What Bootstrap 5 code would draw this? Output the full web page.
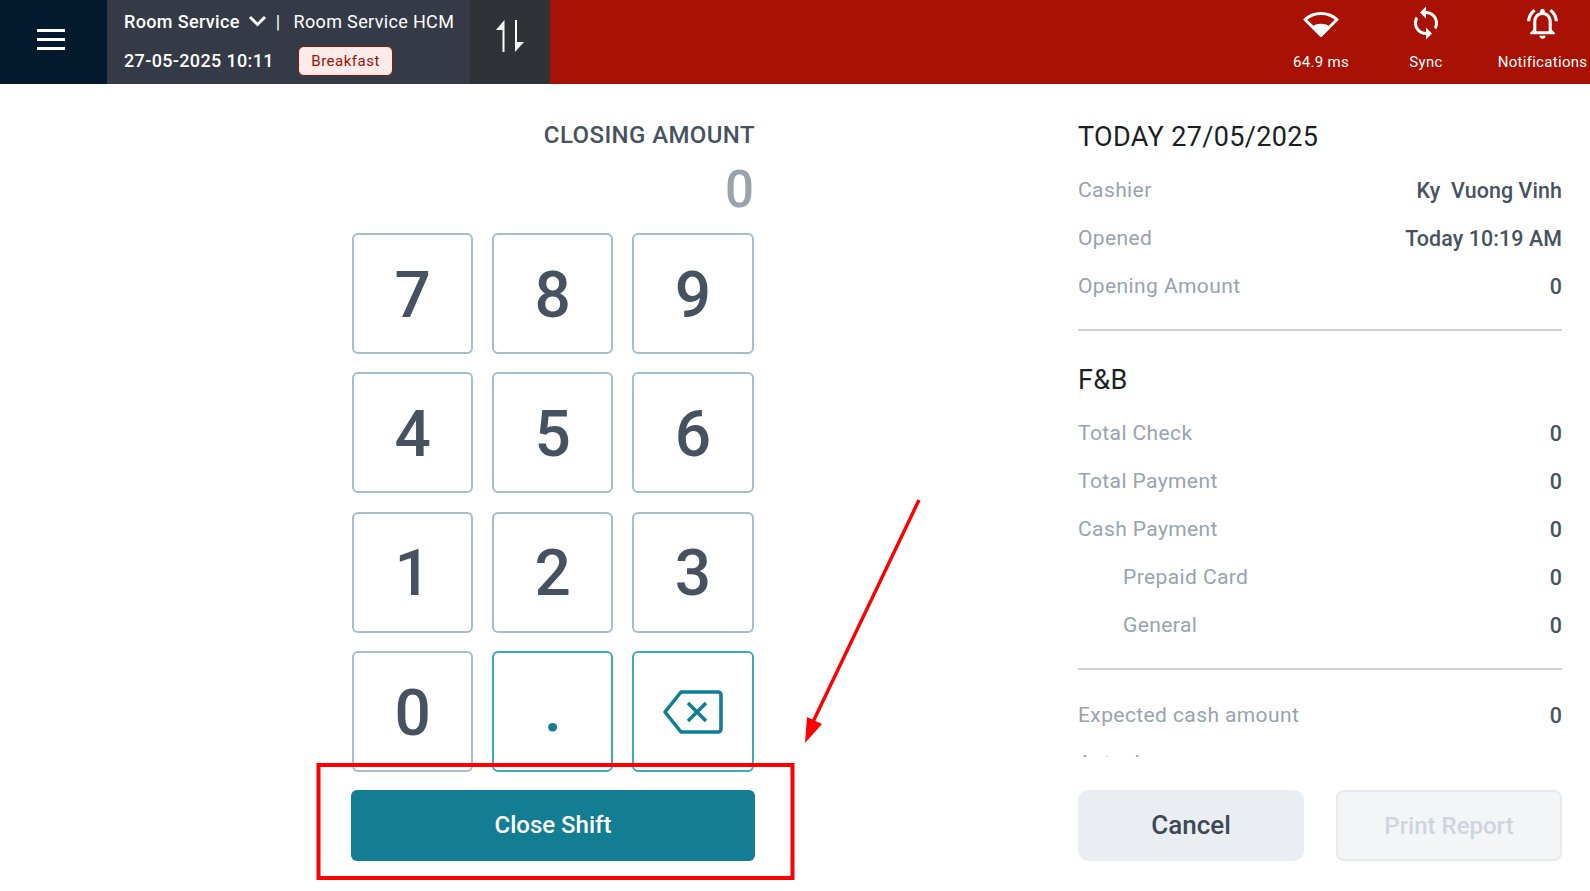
<!DOCTYPE html>
<html lang="en">
<head>
  <meta charset="UTF-8" />
  <meta name="viewport" content="width=device-width, initial-scale=1.0"/>
  <title>Close Shift</title>
  <link href="https://cdn.jsdelivr.net/npm/bootstrap@5.3.6/dist/css/bootstrap.min.css" rel="stylesheet"/>

  <style>
    html, body {
      height: 100%;
      overflow: hidden;
    }
    body {
      font-family: Roboto, "Liberation Sans", sans-serif;
      background-color: #fff;
      position: relative;
    }
    .top-bar {
      height: 84px;
      background-color: #a81103;
      color: #fff;
    }
    .menu-cell {
      width: 107px;
      background-color: #031a2e;
      padding-left: 37px;
      padding-top: 27px;
    }
    .info-cell {
      width: 363px;
      background-color: #343a46;
      padding: 9px 0 0 17px;
    }
    .info-line {
      height: 24px;
      font-size: 18px;
      letter-spacing: .35px;
    }
    .info-line + .info-line {
      margin-top: 15px;
    }
    .info-sep {
      margin: 0 13px 0 9px;
    }
    .meal-tag {
      margin: 1px 0 0 24px;
      padding: 0 12.5px;
      height: 30px;
      line-height: 28px;
      font-size: 15px;
      letter-spacing: .5px;
      color: #9b1208;
      background-color: #ffecea;
      border: 1px solid #9b1208;
      border-radius: 6px;
    }
    .swap-cell {
      width: 80px;
      background-color: #2f3237;
      padding: 19px 0 0 24px;
    }
    .stat-item {
      font-size: 15px;
      letter-spacing: .3px;
      text-align: center;
    }
    .stat-item svg {
      display: block;
      margin: 0 auto;
    }
    .stat-label {
      line-height: 18px;
      white-space: nowrap;
    }
    .stat-wifi {
      width: 60px;
      margin-right: 45px;
      padding-top: 10px;
    }
    .stat-wifi .stat-label {
      margin-top: 15px;
    }
    .stat-sync {
      width: 60px;
      margin-right: 40px;
      padding-top: 5px;
    }
    .stat-sync .stat-label {
      margin-top: 12px;
    }
    .stat-bell {
      width: 93px;
      margin-right: 1px;
      padding-top: 5px;
    }
    .stat-bell .stat-label {
      margin-top: 11px;
    }
    .main-area {
      height: 807px;
      padding-left: 351px;
    }
    .pad-side {
      width: 404px;
      padding-top: 36px;
    }
    .pad-title {
      font-size: 24px;
      line-height: 30px;
      font-weight: 500;
      color: #475260;
      letter-spacing: .4px;
    }
    .pad-value {
      font-size: 51px;
      line-height: 60px;
      font-weight: 500;
      color: #98a3ae;
      margin-top: 10px;
      padding-right: 1px;
    }
    .pad-grid {
      display: grid;
      grid-template-columns: repeat(3, 121.2px);
      grid-auto-rows: 121px;
      gap: 18.4px 19px;
      margin-top: 13px;
      margin-left: 1px;
    }
    .pad-key {
      border: 2px solid #a4bdd1;
      border-radius: 6px;
      background: #fff;
      color: #475260;
      font-size: 64px;
      font-weight: 500;
      padding: 4px 0 0;
    }
    .pad-key.key-accent {
      border-color: #3fa9bf;
      color: #127d93;
    }
    .pad-key.key-dot {
      padding-bottom: 8px;
    }
    .pad-key.key-icon {
      padding: 0;
    }
    .close-btn {
      width: 404px;
      height: 71px;
      margin-top: 18px;
      padding-bottom: 8px;
      background-color: #127d93;
      color: #fff;
      border: 0;
      border-radius: 6px;
      font-size: 24px;
      font-weight: 500;
    }
    .summary-side {
      width: 484px;
      margin-left: 323px;
      padding-top: 35px;
    }
    .summary-title {
      font-size: 27px;
      line-height: 36px;
      font-weight: 400;
      color: #1b1f24;
      letter-spacing: .35px;
      margin: 0;
    }
    .summary-scroll {
      height: 602px;
      overflow: hidden;
    }
    .sum-row {
      height: 48px;
      font-size: 21px;
      letter-spacing: .4px;
      color: #98a3ae;
    }
    .sum-row b {
      font-size: 21.4px;
      font-weight: 500;
      letter-spacing: .1px;
      color: #475260;
    }
    .sub-row {
      padding-left: 45px;
    }
    .sum-line {
      height: 2px;
      margin-top: 18px;
      background-color: #d0d3da;
    }
    .gap-head {
      margin-top: 12px;
    }
    .gap-section {
      margin-top: 31px !important;
    }
    .gap-rows {
      margin-top: 12px;
    }
    .gap-total {
      margin-top: 22px;
    }
    .foot-row {
      margin-top: 33px;
    }
    .foot-btn {
      width: 226px;
      height: 71px;
      font-size: 26px;
      font-weight: 500;
      border-radius: 10px;
    }
    .btn-cancel {
      background-color: #eaeef2;
      border: 0;
      color: #3d4854;
    }
    .btn-print {
      font-size: 24px;
      background-color: #f3f5f7;
      border: 2px solid #e6e9ed;
      color: #ced5dd;
      border-radius: 8px;
    }
    .note-layer {
      position: absolute;
      left: 0;
      top: 0;
      pointer-events: none;
    }
  </style>
</head>
<body>

<div class="top-bar d-flex">
  <div class="menu-cell">
    <svg width="28" height="22" viewBox="0 0 28 22"><path d="M0 1.5h28M0 10.5h28M0 19.5h28" stroke="#fff" stroke-width="3"/></svg>
  </div>
  <div class="info-cell">
    <div class="info-line d-flex align-items-center">
      <span class="fw-medium">Room Service</span>
      <svg class="ms-2" width="19" height="12" viewBox="0 0 19 12"><path d="M2 2l7.5 7.5L17 2" fill="none" stroke="#fff" stroke-width="3"/></svg>
      <span class="info-sep">|</span>
      <span>Room Service HCM</span>
    </div>
    <div class="info-line d-flex align-items-center">
      <span class="fw-medium">27-05-2025 10:11</span>
      <span class="meal-tag">Breakfast</span>
    </div>
  </div>
  <div class="swap-cell">
    <svg width="30" height="36" viewBox="0 0 30 36"><path d="M8.5 11h2v22h-2zM10.5 1v10H2zM21 1h2v22h7L21 33z" fill="#fff"/></svg>
  </div>
  <div class="stat-item stat-wifi ms-auto">
    <svg width="36" height="28" viewBox="0 0 36 28"><path d="M18 25.5L2 9.5C11 1.5 25 1.5 34 9.5Z" fill="none" stroke="#fff" stroke-width="3" stroke-linejoin="round"/><path d="M18 27L8.5 17C13 12.5 23 12.5 27.5 17Z" fill="#fff"/></svg>
    <div class="stat-label">64.9&nbsp;ms</div>
  </div>
  <div class="stat-item stat-sync">
    <svg width="36" height="36" viewBox="0 0 24 24"><path fill="#fff" d="M12 4V1L8 5l4 4V6c3.31 0 6 2.69 6 6 0 1.01-.25 1.97-.7 2.8l1.46 1.46C19.54 15.03 20 13.57 20 12c0-4.42-3.58-8-8-8zm0 14c-3.31 0-6-2.69-6-6 0-1.01.25-1.97.7-2.8L5.24 7.74C4.46 8.97 4 10.43 4 12c0 4.42 3.58 8 8 8v3l4-4-4-4v3z"/></svg>
    <div class="stat-label">Sync</div>
  </div>
  <div class="stat-item stat-bell">
    <svg width="37" height="37" viewBox="0 0 24 24"><path fill="#fff" d="M7.58 4.08L6.15 2.65C3.75 4.48 2.17 7.3 2.03 10.5h2c.15-2.65 1.51-4.97 3.55-6.42zm12.39 6.42h2c-.15-3.2-1.73-6.02-4.12-7.85l-1.42 1.43c2.02 1.45 3.39 3.77 3.54 6.42zM18 11c0-3.07-1.64-5.64-4.5-6.32V4c0-.83-.67-1.5-1.5-1.5s-1.5.67-1.5 1.5v.68C7.63 5.36 6 7.92 6 11v5l-2 2v1h16v-1l-2-2v-5zm-2 6H8v-6c0-2.48 1.51-4.5 4-4.5s4 2.02 4 4.5v6zm-4 5c.14 0 .27-.01.4-.04.65-.14 1.18-.58 1.44-1.18.1-.24.15-.5.15-.78h-4c.01 1.1.9 2 2.01 2z"/></svg>
    <div class="stat-label">Notifications</div>
  </div>
</div>

<div class="main-area d-flex">
  <div class="pad-side">
    <div class="pad-title text-end">CLOSING AMOUNT</div>
    <div class="pad-value text-end">0</div>
    <div class="pad-grid">
      <button class="btn pad-key">7</button>
      <button class="btn pad-key">8</button>
      <button class="btn pad-key">9</button>
      <button class="btn pad-key">4</button>
      <button class="btn pad-key">5</button>
      <button class="btn pad-key">6</button>
      <button class="btn pad-key">1</button>
      <button class="btn pad-key">2</button>
      <button class="btn pad-key">3</button>
      <button class="btn pad-key">0</button>
      <button class="btn pad-key key-accent key-dot">.</button>
      <button class="btn pad-key key-accent key-icon d-flex align-items-center justify-content-center">
        <svg width="60" height="44" viewBox="0 0 60 44"><path d="M18 2H55a3 3 0 0 1 3 3V39a3 3 0 0 1-3 3H18L2 22Z" fill="none" stroke="#127d93" stroke-width="3.6" stroke-linejoin="round"/><path d="M25 13l18 18M43 13L25 31" fill="none" stroke="#127d93" stroke-width="3.6"/></svg>
      </button>
    </div>
    <button class="btn close-btn">Close Shift</button>
  </div>

  <div class="summary-side">
    <h2 class="summary-title">TODAY 27/05/2025</h2>
    <div class="summary-scroll">
      <div class="sum-row d-flex justify-content-between align-items-center gap-head"><span>Cashier</span><b>Ky&nbsp; Vuong Vinh</b></div>
      <div class="sum-row d-flex justify-content-between align-items-center"><span>Opened</span><b>Today 10:19 AM</b></div>
      <div class="sum-row d-flex justify-content-between align-items-center"><span>Opening Amount</span><b>0</b></div>
      <div class="sum-line"></div>
      <h2 class="summary-title gap-section">F&amp;B</h2>
      <div class="sum-row d-flex justify-content-between align-items-center gap-rows"><span>Total Check</span><b>0</b></div>
      <div class="sum-row d-flex justify-content-between align-items-center"><span>Total Payment</span><b>0</b></div>
      <div class="sum-row d-flex justify-content-between align-items-center"><span>Cash Payment</span><b>0</b></div>
      <div class="sum-row sub-row d-flex justify-content-between align-items-center"><span>Prepaid Card</span><b>0</b></div>
      <div class="sum-row sub-row d-flex justify-content-between align-items-center"><span>General</span><b>0</b></div>
      <div class="sum-line"></div>
      <div class="sum-row d-flex justify-content-between align-items-center gap-total"><span>Expected cash amount</span><b>0</b></div>
      <div class="sum-row d-flex justify-content-between align-items-center"><span>Actual</span></div>
    </div>
    <div class="foot-row d-flex justify-content-between">
      <button class="btn foot-btn btn-cancel">Cancel</button>
      <button class="btn foot-btn btn-print">Print Report</button>
    </div>
  </div>
</div>

<!-- annotation drawn over the screenshot -->
<svg class="note-layer" width="1590" height="891" viewBox="0 0 1590 891">
  <rect x="318.5" y="765" width="474" height="113" fill="none" stroke="#fe0000" stroke-width="4"/>
  <path d="M919 500L812 724" stroke="#fe0000" stroke-width="3.4" fill="none"/>
  <path d="M805 743L807 717L822 724Z" fill="#fe0000"/>
</svg>

<script src="https://cdn.jsdelivr.net/npm/bootstrap@5.3.6/dist/js/bootstrap.bundle.min.js"></script>
</body>
</html>
